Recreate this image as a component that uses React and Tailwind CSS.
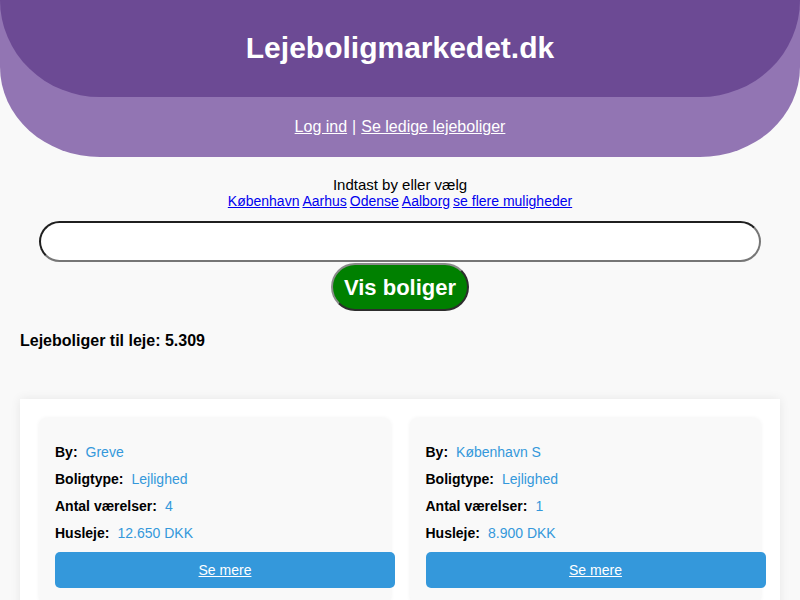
import React from 'react';

const listings = [
    { by: 'Greve', type: 'Lejlighed', rooms: '4', rent: '12.650 DKK' },
    { by: 'København S', type: 'Lejlighed', rooms: '1', rent: '8.900 DKK' },
];

const Row = ({ label, value }) => (
    <p className="my-[10px] leading-[17px] text-[14px]">
        <span className="font-bold text-black mr-[8px]">{label}</span>
        <span className="text-[#3498db]">{value}</span>
    </p>
);

const Card = ({ item }) => (
    <div className="bg-[#f9f9f9] rounded-lg shadow-[0_0_4px_rgba(0,0,0,0.06)] px-[16px] pt-[16px] pb-[16px]">
        <Row label="By:" value={item.by} />
        <Row label="Boligtype:" value={item.type} />
        <Row label="Antal værelser:" value={item.rooms} />
        <Row label="Husleje:" value={item.rent} />
        <a href="#" className="mt-[10px] block w-[340px] h-[36px] bg-[#3498db] rounded-[5px] text-white text-[14px] underline flex items-center justify-center">
            Se mere
        </a>
    </div>
);

export default function App() {
    return (
        <div className="min-h-[600px] bg-[#f9f9f9] font-['Liberation_Sans',Arial,sans-serif] text-black overflow-hidden">
            <header className="bg-[#9275b3] h-[157px] rounded-b-[100px_90px] flex flex-col">
                <div className="bg-[#6c4a94] h-[97px] rounded-b-[100px_97px] flex items-center justify-center pb-[2px]">
                    <h1 className="text-white font-bold text-[30px]">Lejeboligmarkedet.dk</h1>
                </div>
                <nav className="flex-1 flex items-center justify-center text-white text-[16px]">
                    <a href="#" className="underline">Log ind</a>
                    <span className="mx-[5px]">|</span>
                    <a href="#" className="underline">Se ledige lejeboliger</a>
                </nav>
            </header>

            <div className="mt-[19px] text-center leading-[17px]">
                <div className="text-[15px]">Indtast by eller vælg</div>
                <div className="text-[14px] text-[#0000ee] space-x-[3px]">
                    <a href="#" className="underline">København</a>
                    <a href="#" className="underline">Aarhus</a>
                    <a href="#" className="underline">Odense</a>
                    <a href="#" className="underline">Aalborg</a>
                    <a href="#" className="underline">se flere muligheder</a>
                </div>
            </div>

            <div className="mt-[11px] flex flex-col items-center">
                <input className="w-[722px] h-[41px] bg-white rounded-full border-2 border-t-[#1f1f1f] border-l-[#1f1f1f] border-b-[#767676] border-r-[#767676] px-4 outline-none" />
                <button className="mt-[1px] h-[48px] px-[11px] bg-[#008000] text-white font-bold text-[22px] rounded-full border-2 border-t-[#8a8a8a] border-l-[#8a8a8a] border-b-[#2d2d2d] border-r-[#2d2d2d]">
                    Vis boliger
                </button>
            </div>

            <h2 className="ml-[20px] mt-[20px] font-bold text-[16px] leading-[19px]">Lejeboliger til leje: 5.309</h2>

            <div className="mx-[20px] mt-[49px] bg-white shadow-[0_0_10px_rgba(0,0,0,0.08)] p-[19px] grid grid-cols-2 gap-[19px]">
                {listings.map((item) => (
                    <Card key={item.by} item={item} />
                ))}
            </div>
        </div>
    );
}
